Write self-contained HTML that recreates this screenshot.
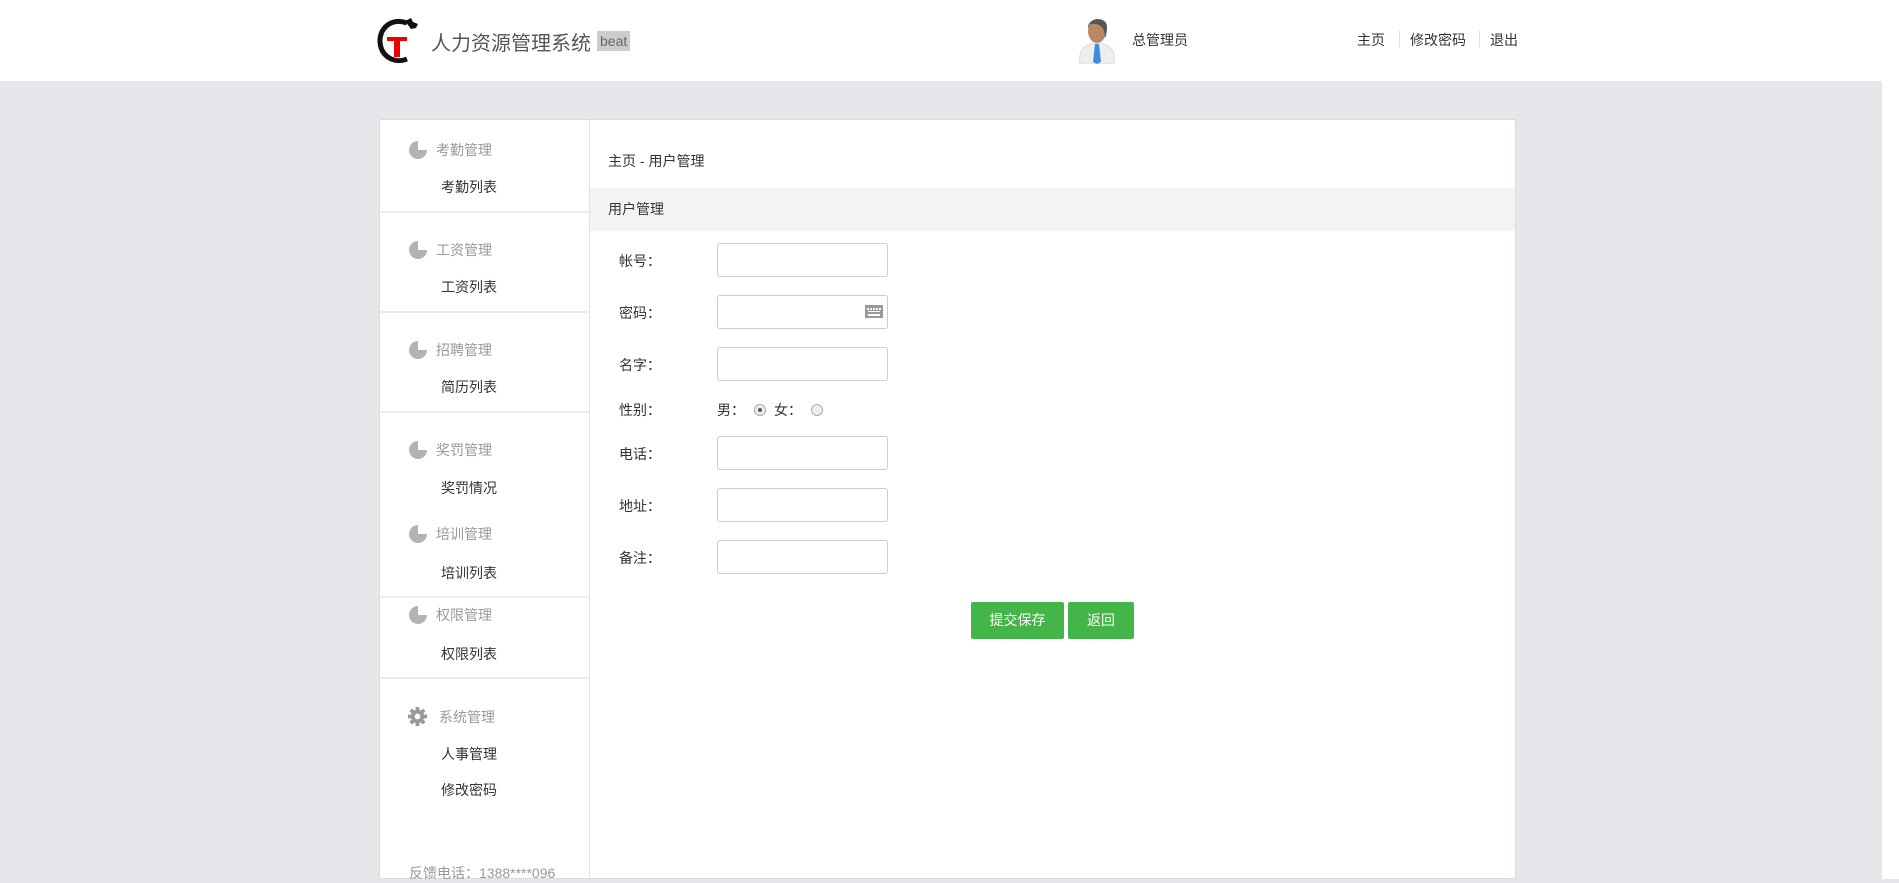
<!DOCTYPE html>
<html><head><meta charset="utf-8"><style>
*{margin:0;padding:0;box-sizing:border-box}
body{width:1899px;height:879px;overflow:hidden;background:#e6e7ea;font-family:"Liberation Sans","Noto Sans CJK SC",sans-serif;font-size:14px;color:#333;position:relative}
.a{position:absolute;white-space:nowrap}
#hdr{position:absolute;left:0;top:0;width:1882px;height:81px;background:#fff}
#sb{position:absolute;right:0;top:0;width:17px;height:879px;background:#fff}
#panel{position:absolute;left:379px;top:119px;width:1137px;height:760px;background:#fff;border:1px solid #dcdcdf}
#side{position:absolute;left:379px;top:119px;width:211px;height:760px;border-right:1px solid #e2e2e2}
.hl{position:absolute;left:380px;width:209px;height:2px;background:#ececec}
.gh{color:#999;font-size:14px}
.pie{position:absolute;width:18px;height:18px;border-radius:50%;background:#b3b3b3}
.pie:after{content:"";position:absolute;left:9px;top:0;width:9px;height:9px;background:#fff}
.pie:before{content:"";position:absolute;left:9px;top:1px;width:8px;height:8px;background:#b3b3b3;border-top-right-radius:8px}
.inp{position:absolute;left:717px;width:171px;height:34px;border:1px solid #ccc;border-radius:3px;background:#fff}
.lb{left:619px}
.rad{position:absolute;width:12px;height:12px;border-radius:50%;border:1px solid #aaa;background:#eee}
.btn{position:absolute;top:602px;height:37px;background:#44b549;color:#fff;border-radius:2px;text-align:center;line-height:37px;font-size:14px}
</style></head><body>
<div id="hdr"></div>
<div id="sb"></div>
<!-- logo -->
<svg class="a" style="left:377px;top:17px" width="50" height="48" viewBox="0 0 50 48">
<path d="M30 6 C14 0 2 12 3 25 C4 40 18 47 30 42" fill="none" stroke="#111" stroke-width="5"/>
<path d="M28 4 l6 -3 l2 4 l5 2 l-2 4 l-5 1z" fill="#111"/>
<path d="M10 20 h20 v4 h-7 v16 h-6 v-16 h-7z" fill="#e00"/>
</svg>
<div class="a" style="left:431px;top:27px;font-size:20px;color:#555">人力资源管理系统</div>
<div class="a" style="left:597px;top:31px;background:#ccc;color:#666;font-size:14px;padding:1px 3px;line-height:18px">beat</div>
<!-- avatar -->
<svg class="a" style="left:1076px;top:14px" width="42" height="50" viewBox="0 0 42 50">
<path d="M4 50 C2 36 8 30 21 29 C34 30 40 36 38 50z" fill="#eee" stroke="#ddd"/>
<path d="M19 30 h4 l2 18 l-4 2 l-4 -2z" fill="#3a8ee0"/>
<ellipse cx="21" cy="17" rx="9" ry="12" fill="#b98764"/>
<path d="M12 14 C12 3 30 2 31 12 C31 18 30 22 29 24 C29 14 25 9 14 10z" fill="#555"/>
</svg>
<div class="a" style="left:1132px;top:30px;font-size:14px">总管理员</div>
<div class="a" style="left:1357px;top:30px;font-size:14px">主页</div>
<div class="a" style="left:1399px;top:31px;width:1px;height:16px;background:#ddd"></div>
<div class="a" style="left:1410px;top:30px;font-size:14px">修改密码</div>
<div class="a" style="left:1479px;top:31px;width:1px;height:16px;background:#ddd"></div>
<div class="a" style="left:1490px;top:30px;font-size:14px">退出</div>

<div id="panel"></div>
<div id="side"></div>
<!-- sidebar -->
<div class="pie" style="left:409px;top:141px"></div><div class="a gh" style="left:436px;top:140px">考勤管理</div>
<div class="a" style="left:441px;top:177px">考勤列表</div>
<div class="hl" style="top:211px"></div>
<div class="pie" style="left:409px;top:241px"></div><div class="a gh" style="left:436px;top:240px">工资管理</div>
<div class="a" style="left:441px;top:277px">工资列表</div>
<div class="hl" style="top:311px"></div>
<div class="pie" style="left:409px;top:341px"></div><div class="a gh" style="left:436px;top:340px">招聘管理</div>
<div class="a" style="left:441px;top:377px">简历列表</div>
<div class="hl" style="top:411px"></div>
<div class="pie" style="left:409px;top:441px"></div><div class="a gh" style="left:436px;top:440px">奖罚管理</div>
<div class="a" style="left:441px;top:478px">奖罚情况</div>
<div class="pie" style="left:409px;top:525px"></div><div class="a gh" style="left:436px;top:524px">培训管理</div>
<div class="a" style="left:441px;top:563px">培训列表</div>
<div class="hl" style="top:596px"></div>
<div class="pie" style="left:409px;top:606px"></div><div class="a gh" style="left:436px;top:605px">权限管理</div>
<div class="a" style="left:441px;top:644px">权限列表</div>
<div class="hl" style="top:677px"></div>
<svg class="a" style="left:408px;top:707px" width="19" height="19" viewBox="0 0 20 20"><g fill="#999"><circle cx="10" cy="10" r="7"/><rect x="8" y="0" width="4" height="20"/><rect x="0" y="8" width="20" height="4"/><rect x="8" y="0" width="4" height="20" transform="rotate(45 10 10)"/><rect x="8" y="0" width="4" height="20" transform="rotate(-45 10 10)"/></g><circle cx="10" cy="10" r="3" fill="#fff"/></svg>
<div class="a gh" style="left:439px;top:707px">系统管理</div>
<div class="a" style="left:441px;top:744px">人事管理</div>
<div class="a" style="left:441px;top:780px">修改密码</div>
<div class="a" style="left:409px;top:863px;color:#999">反馈电话：1388****096</div>

<!-- content -->
<div class="a" style="left:608px;top:151px">主页 - 用户管理</div>
<div class="a" style="left:590px;top:188px;width:925px;height:43px;background:#f3f3f6"></div>
<div class="a" style="left:608px;top:199px">用户管理</div>

<div class="a lb" style="top:251px">帐号：</div><div class="inp" style="top:243px"></div>
<div class="a lb" style="top:303px">密码：</div><div class="inp" style="top:295px"></div>
<svg class="a" style="left:865px;top:305px" width="18" height="13" viewBox="0 0 18 13"><rect width="18" height="13" fill="#999"/><g fill="#fff"><rect x="2" y="3" width="2" height="2"/><rect x="5" y="3" width="2" height="2"/><rect x="8" y="3" width="2" height="2"/><rect x="11" y="3" width="2" height="2"/><rect x="14" y="3" width="2" height="2"/><rect x="3" y="6" width="12" height="1"/><rect x="3" y="9" width="12" height="2"/></g></svg>
<div class="a lb" style="top:355px">名字：</div><div class="inp" style="top:347px"></div>
<div class="a lb" style="top:400px">性别：</div>
<div class="a" style="left:717px;top:400px">男：</div>
<div class="rad" style="left:754px;top:404px"><div style="width:4px;height:4px;border-radius:50%;background:#555;margin:3px"></div></div>
<div class="a" style="left:774px;top:400px">女：</div>
<div class="rad" style="left:811px;top:404px"></div>
<div class="a lb" style="top:444px">电话：</div><div class="inp" style="top:436px"></div>
<div class="a lb" style="top:496px">地址：</div><div class="inp" style="top:488px"></div>
<div class="a lb" style="top:548px">备注：</div><div class="inp" style="top:540px"></div>

<div class="btn" style="left:971px;width:93px">提交保存</div>
<div class="btn" style="left:1068px;width:66px">返回</div>
</body></html>
